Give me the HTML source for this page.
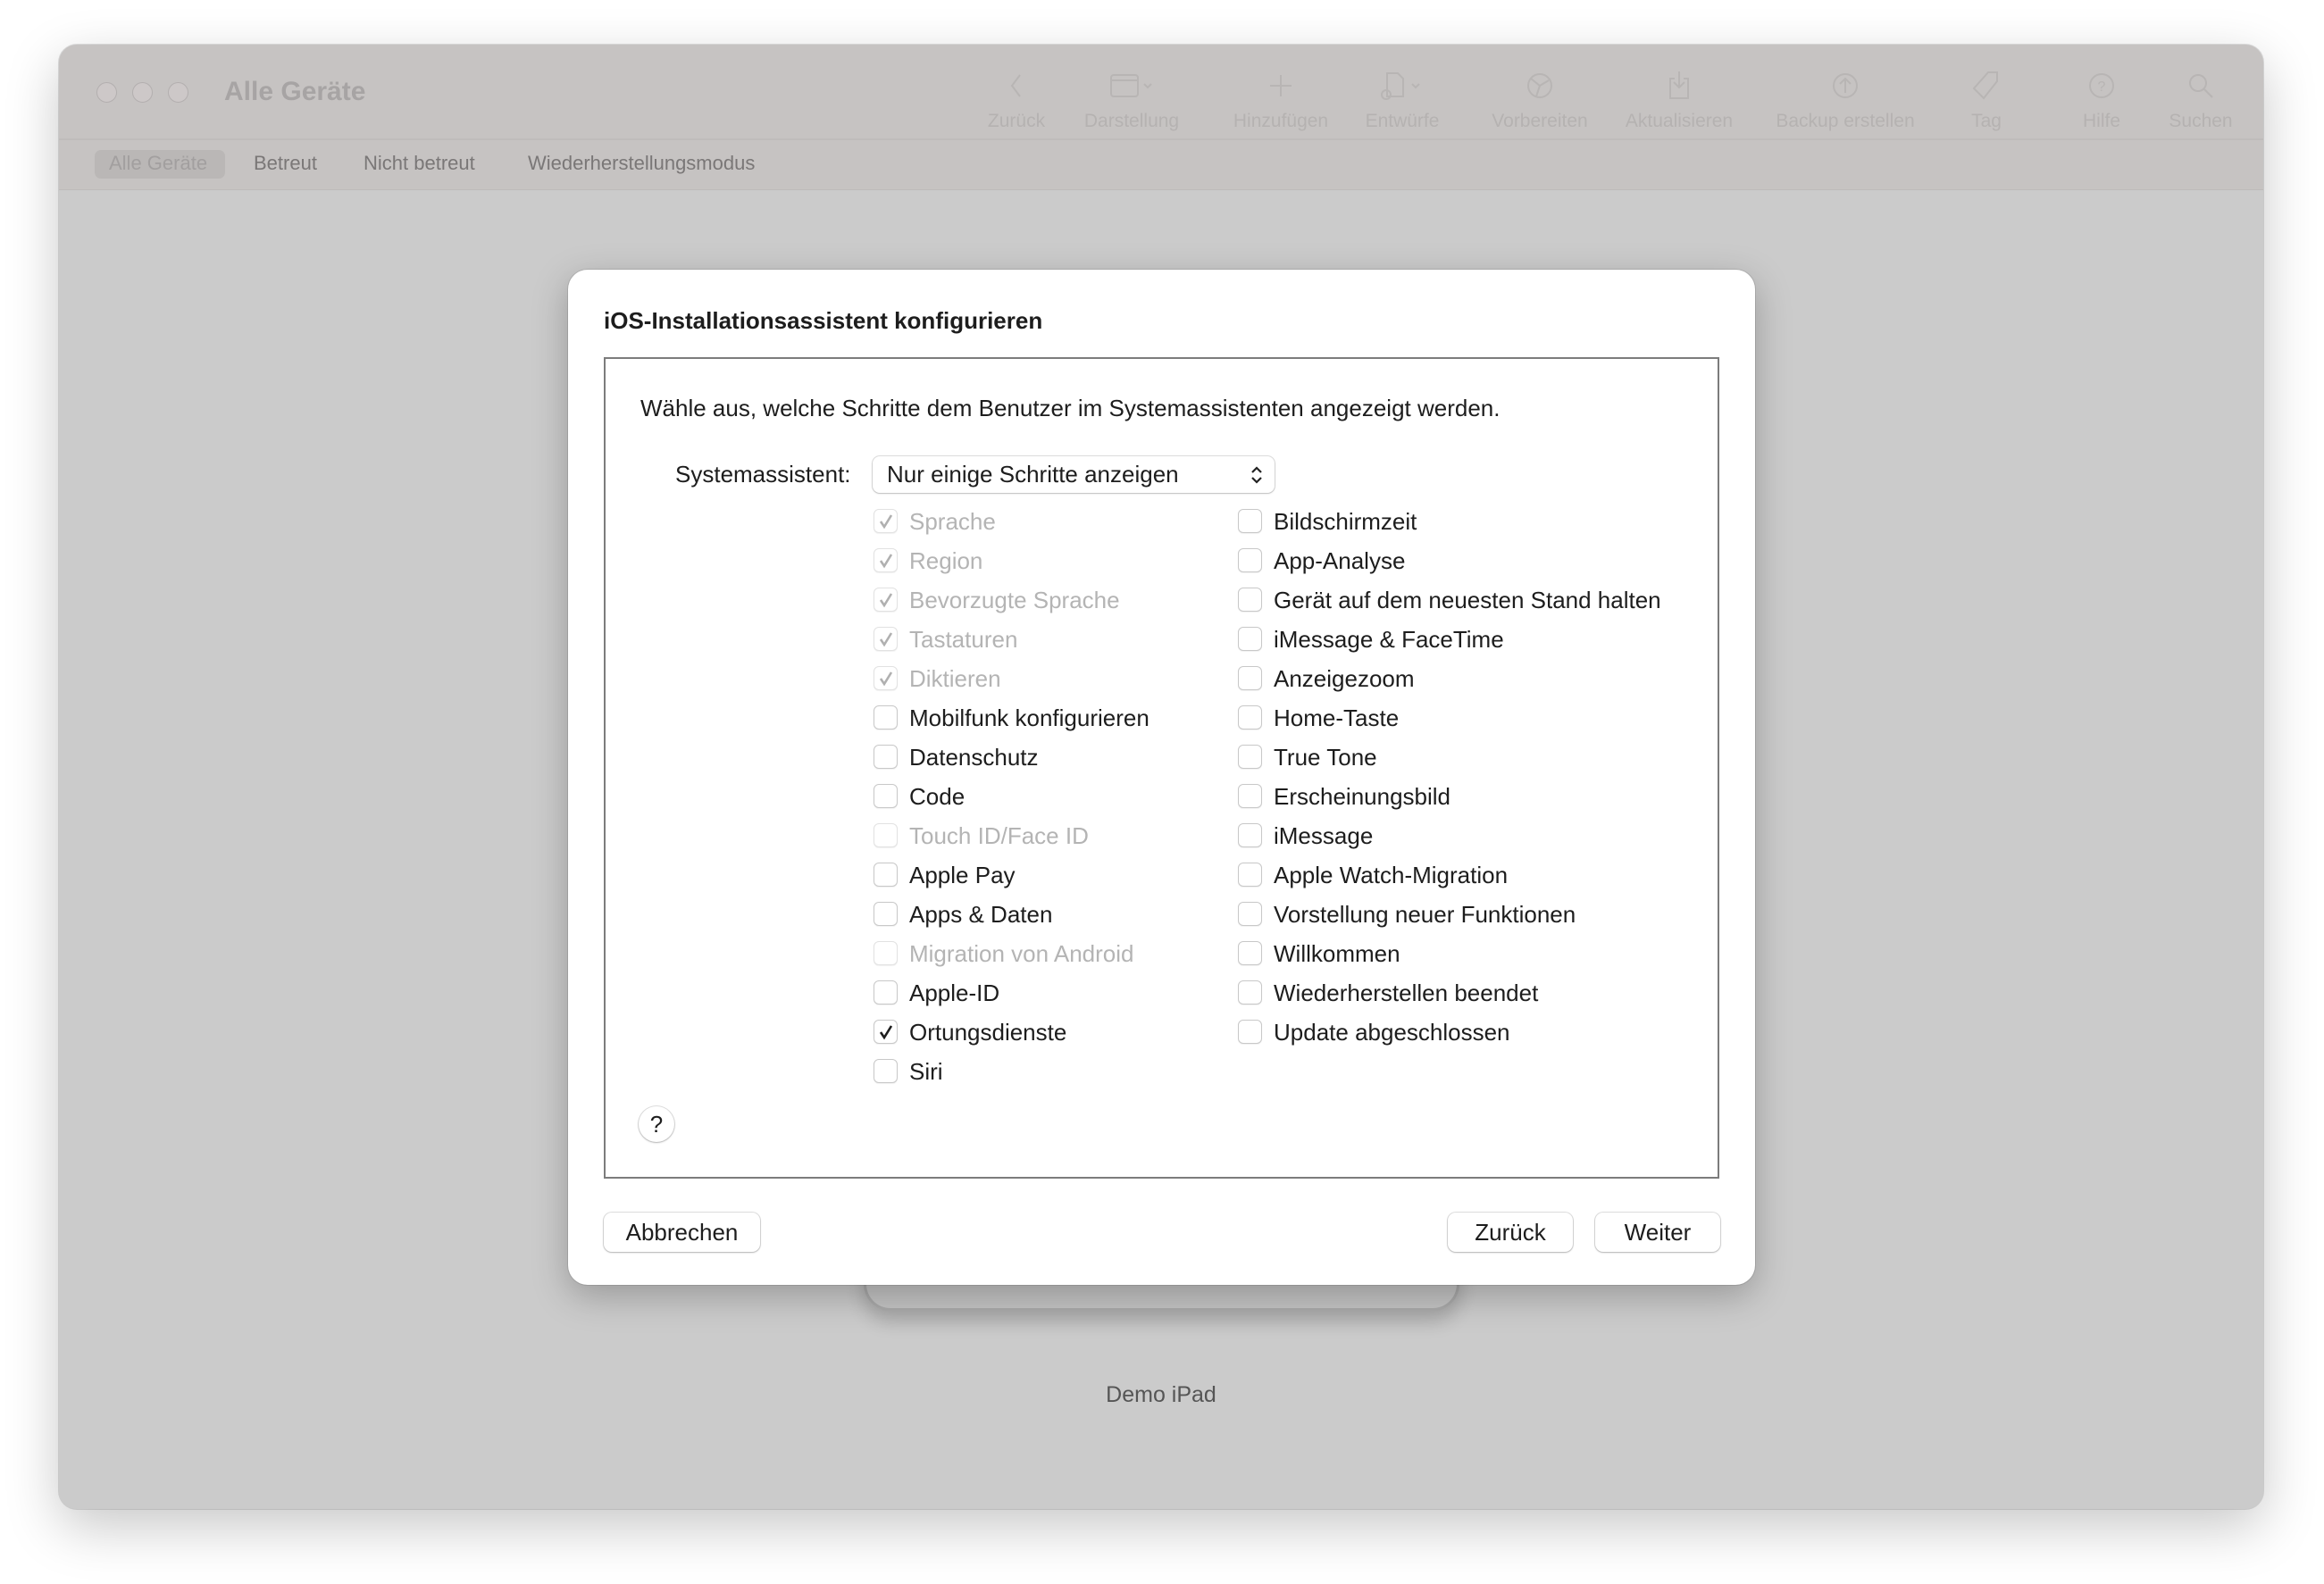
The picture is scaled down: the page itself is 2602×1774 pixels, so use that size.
<!DOCTYPE html>
<html><head><meta charset="utf-8"><style>
*{margin:0;padding:0;box-sizing:border-box}
body{width:2602px;height:1774px;background:#fff;position:relative;overflow:hidden;font-family:"Liberation Sans",sans-serif;color:#1d1d1d}
.abs{position:absolute}
#win{left:66px;top:50px;width:2468px;height:1640px;border-radius:20px;background:#cbcbcb;box-shadow:0 20px 60px rgba(0,0,0,.22),0 0 0 1px rgba(0,0,0,.12);overflow:hidden}
#tb{left:0;top:0;width:2468px;height:163px;background:#c6c3c2;border-bottom:1px solid #bdbaba}
#sep{left:0;top:105px;width:2468px;height:2px;background:#bfbcbb}
.tl{width:23px;height:23px;border-radius:50%;border:1.5px solid #b3afaf;background:#cdc8c8;top:42px}
.tlabel{font-size:21px;color:#b5b2b1;top:74px;transform:translateX(-50%);white-space:nowrap}
.tic{top:28px;transform:translateX(-50%)}
.tab{top:120px;font-size:22px;color:#7a7777}
#dlg{left:636px;top:302px;width:1329px;height:1137px;background:#fff;border-radius:22px;box-shadow:0 12px 40px rgba(0,0,0,.25),0 0 0 1px rgba(0,0,0,.1)}
#box{left:40px;top:98px;width:1249px;height:920px;border:2px solid #7c7c7c}
.row{font-size:26px;white-space:nowrap;line-height:30px}
.cb{display:inline-block;width:27px;height:27px;border:1.5px solid #c8c8c8;border-radius:6px;background:#fff;vertical-align:middle;position:absolute;left:0;top:1px;box-shadow:0 1px 1px rgba(0,0,0,.06)}
.cb svg{position:absolute;left:3px;top:3px}
.lbl{position:absolute;left:40px;top:0}
.dis .lbl{color:#b4b4b4}
.dis .cb{border-color:#e2e2e2}
.btn{height:44px;border-radius:9px;background:#fff;box-shadow:0 0 0 1px rgba(0,0,0,.12),0 1px 2px rgba(0,0,0,.2);font-size:26px;text-align:center;line-height:44px}
</style></head><body>
<div id="win" class="abs">
 <div id="tb" class="abs"></div>
 <div id="sep" class="abs"></div>
 <div class="abs tl" style="left:42px"></div>
 <div class="abs tl" style="left:82px"></div>
 <div class="abs tl" style="left:122px"></div>
 <div class="abs" style="left:185px;top:36px;font-size:30px;font-weight:bold;color:#a7a4a4">Alle Geräte</div>

 <svg class="abs tic" style="left:1072px" width="30" height="36"><path d="M19 6 L10 18 L19 30" stroke="#b8b5b4" stroke-width="2" fill="none"/></svg>
 <svg class="abs tic" style="left:1201px" width="54" height="36"><rect x="4" y="6" width="30" height="24" rx="3" stroke="#b8b5b4" stroke-width="2" fill="none"/><line x1="4" y1="12" x2="34" y2="12" stroke="#b8b5b4" stroke-width="2"/><path d="M41 16 l4 4 l4 -4" stroke="#b8b5b4" stroke-width="2" fill="none"/></svg>
 <svg class="abs tic" style="left:1368px" width="30" height="36"><path d="M15 6 V30 M3 18 H27" stroke="#b8b5b4" stroke-width="2"/></svg>
 <svg class="abs tic" style="left:1504px" width="54" height="36"><path d="M10 4 h12 l6 6 v20 h-18 z" stroke="#b8b5b4" stroke-width="2" fill="none"/><circle cx="9" cy="28" r="5" stroke="#b8b5b4" stroke-width="2" fill="none"/><path d="M38 16 l4 4 l4 -4" stroke="#b8b5b4" stroke-width="2" fill="none"/></svg>
 <svg class="abs tic" style="left:1658px" width="36" height="36"><circle cx="18" cy="18" r="13" stroke="#b8b5b4" stroke-width="2" fill="none"/><path d="M18 18 L8 10 M18 18 L28 12 M18 18 L14 30" stroke="#b8b5b4" stroke-width="2"/></svg>
 <svg class="abs tic" style="left:1814px" width="36" height="36"><path d="M13 10 h-5 v22 h20 v-22 h-5 M18 2 v18 M12 14 l6 6 l6 -6" stroke="#b8b5b4" stroke-width="2" fill="none"/></svg>
 <svg class="abs tic" style="left:2000px" width="36" height="36"><circle cx="18" cy="18" r="13" stroke="#b8b5b4" stroke-width="2" fill="none"/><path d="M18 26 V10 M12 16 l6 -6 l6 6" stroke="#b8b5b4" stroke-width="2" fill="none"/></svg>
 <svg class="abs tic" style="left:2158px" width="36" height="36"><path d="M20 3 h10 v10 L15 32 L4 21 Z" stroke="#b8b5b4" stroke-width="2" fill="none"/></svg>
 <svg class="abs tic" style="left:2287px" width="36" height="36"><circle cx="18" cy="18" r="13" stroke="#b8b5b4" stroke-width="2" fill="none"/><text x="18" y="24" font-size="16" text-anchor="middle" fill="#b8b5b4" font-family="Liberation Sans">?</text></svg>
 <svg class="abs tic" style="left:2398px" width="36" height="36"><circle cx="15" cy="15" r="9" stroke="#b8b5b4" stroke-width="2" fill="none"/><path d="M22 22 L31 31" stroke="#b8b5b4" stroke-width="2"/></svg>

 <div class="abs tlabel" style="left:1072px">Zurück</div>
 <div class="abs tlabel" style="left:1201px">Darstellung</div>
 <div class="abs tlabel" style="left:1368px">Hinzufügen</div>
 <div class="abs tlabel" style="left:1504px">Entwürfe</div>
 <div class="abs tlabel" style="left:1658px">Vorbereiten</div>
 <div class="abs tlabel" style="left:1814px">Aktualisieren</div>
 <div class="abs tlabel" style="left:2000px">Backup erstellen</div>
 <div class="abs tlabel" style="left:2158px">Tag</div>
 <div class="abs tlabel" style="left:2287px">Hilfe</div>
 <div class="abs tlabel" style="left:2398px">Suchen</div>

 <div class="abs" style="left:40px;top:118px;width:146px;height:32px;border-radius:7px;background:#bab7b6"></div>
 <div class="abs tab" style="left:56px;color:#a29f9f">Alle Geräte</div>
 <div class="abs tab" style="left:218px">Betreut</div>
 <div class="abs tab" style="left:341px">Nicht betreut</div>
 <div class="abs tab" style="left:525px">Wiederherstellungsmodus</div>

 <!-- iPad stand -->
 <div class="abs" style="left:901px;top:1330px;width:667px;height:88px;border-radius:0 0 30px 30px;background:#c4c4c4;border:3px solid #aaa;border-top:none;box-shadow:0 12px 20px rgba(0,0,0,.18)"></div>
 <div class="abs" style="left:0;top:1498px;width:2468px;text-align:center;font-size:25px;color:#555">Demo iPad</div>
</div>

<div id="dlg" class="abs">
 <div class="abs" style="left:40px;top:42px;font-size:26px;font-weight:bold">iOS-Installationsassistent konfigurieren</div>
 <div id="box" class="abs">
  <div class="abs" style="left:39px;top:40px;font-size:26px;white-space:nowrap">Wähle aus, welche Schritte dem Benutzer im Systemassistenten angezeigt werden.</div>
  <div class="abs" style="left:78px;top:114px;font-size:26px">Systemassistent:</div>
  <div class="abs" style="left:299px;top:109px;width:450px;height:41px;border-radius:8px;background:#fff;box-shadow:0 0 0 1px rgba(0,0,0,.13),0 1px 2px rgba(0,0,0,.15);font-size:26px;line-height:41px;padding-left:16px">Nur einige Schritte anzeigen
   <svg style="position:absolute;right:12px;top:10px" width="16" height="22"><path d="M3 8 L8 3 L13 8 M3 14 L8 19 L13 14" stroke="#222" stroke-width="2.2" fill="none"/></svg></div>
  <div class="abs" style="left:300px;top:167px" id="c1"></div>
  <div class="abs" style="left:708px;top:167px" id="c2"></div>
  <div class="abs" style="left:37px;top:837px;width:40px;height:40px;border-radius:50%;background:#fff;box-shadow:0 0 0 1px rgba(0,0,0,.12),0 1px 2px rgba(0,0,0,.2);text-align:center;line-height:40px;font-size:26px">?</div>
 </div>
 <div class="abs btn" style="left:40px;top:1056px;width:175px">Abbrechen</div>
 <div class="abs btn" style="left:985px;top:1056px;width:140px">Zurück</div>
 <div class="abs btn" style="left:1150px;top:1056px;width:140px">Weiter</div>
</div>

<script>
const chk=c=>`<svg width="20" height="20"><path d="M4 10 L8 16 L16 3" stroke="${c}" stroke-width="2.6" fill="none"/></svg>`;
const c1=[["Sprache","d"],["Region","d"],["Bevorzugte Sprache","d"],["Tastaturen","d"],["Diktieren","d"],["Mobilfunk konfigurieren"],["Datenschutz"],["Code"],["Touch ID/Face ID","x"],["Apple Pay"],["Apps & Daten"],["Migration von Android","x"],["Apple-ID"],["Ortungsdienste","c"],["Siri"]];
const c2=["Bildschirmzeit","App-Analyse","Gerät auf dem neuesten Stand halten","iMessage & FaceTime","Anzeigezoom","Home-Taste","True Tone","Erscheinungsbild","iMessage","Apple Watch-Migration","Vorstellung neuer Funktionen","Willkommen","Wiederherstellen beendet","Update abgeschlossen"];
function mk(el,items){let h="";items.forEach((it,i)=>{let [t,s]=Array.isArray(it)?it:[it];let cls=(s=="d"||s=="x")?"row dis":"row";let inner=s=="d"?chk("#b0b0b0"):s=="c"?chk("#1d1d1d"):"";h+=`<div class="abs ${cls}" style="left:0;top:${i*44}px;width:420px;height:30px"><span class="cb">${inner}</span><span class="lbl">${t.replace("&","&amp;")}</span></div>`});document.getElementById(el).innerHTML=h}
mk("c1",c1);mk("c2",c2);
</script>
</body></html>
